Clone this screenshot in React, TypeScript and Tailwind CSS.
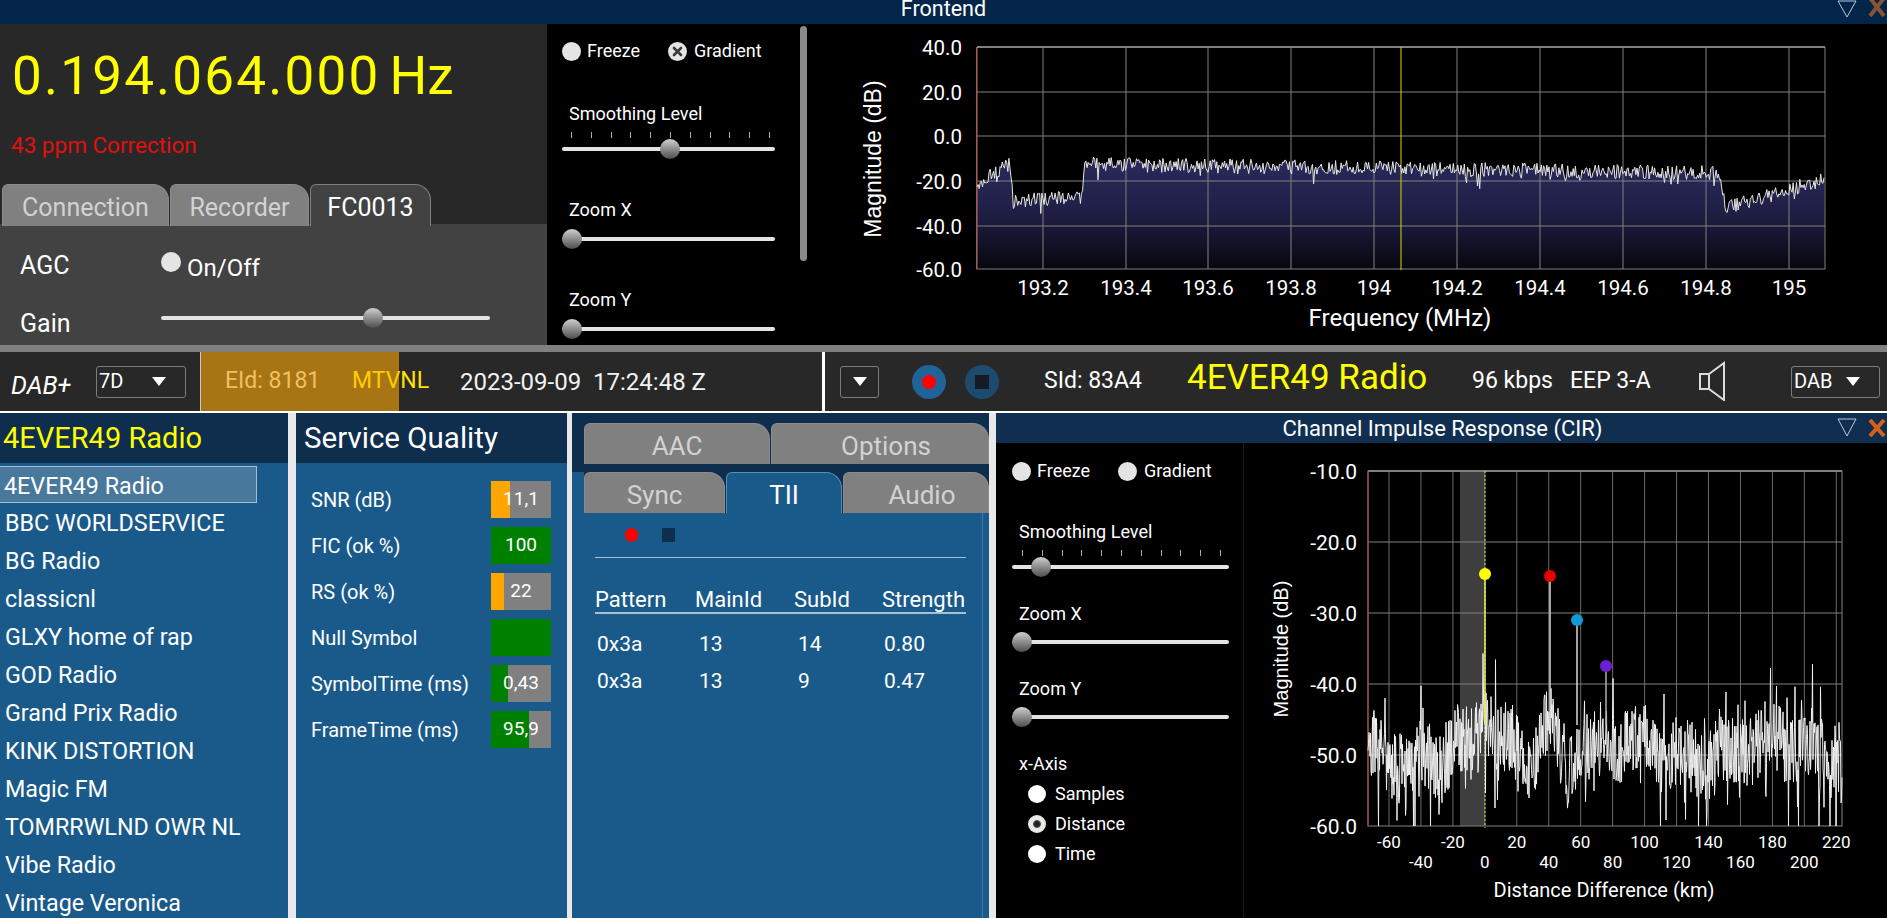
import React from 'react';

// deterministic noise so the traces don't change between renders
function makeRng(seed: number) {
  let s = seed;
  return () => {
    s = (s * 1664525 + 1013904223) % 4294967296;
    return s / 4294967296;
  };
}

const spectrumLevel = (x: number) => {
  if (x < 1010) return -21 + ((x - 977) / 33) * 9;
  if (x < 1013) return -12 - ((x - 1010) / 3) * 16;
  if (x < 1082) return -29 + ((x - 1013) / 69) * 2;
  if (x < 1084) return -27 + ((x - 1082) / 2) * 15;
  if (x < 1718) return -12.5 - ((x - 1084) / 634) * 4;
  if (x < 1726) return -16.5 - ((x - 1718) / 8) * 16;
  return -32 + ((x - 1726) / 99) * 13;
};

function spectrumPoints() {
  const rng = makeRng(49);
  const pts: string[] = [];
  for (let x = 977; x <= 1825; x += 1.1) {
    let db = spectrumLevel(x) + (rng() - 0.5) * 6.5;
    if (rng() < 0.06) db -= rng() * 6;
    pts.push(`${x.toFixed(1)},${(136 - db * 2.25).toFixed(1)}`);
  }
  return pts;
}

function cirPoints() {
  const rng = makeRng(8181);
  const pts: string[] = [];
  for (let x = 1368; x <= 1842; x += 0.5) {
    const slow = Math.sin(x / 23) * 1.5 + Math.sin(x / 7) * 1.2;
    const near = Math.exp(-((x - 1485) ** 2) / 60) * 4 + Math.exp(-((x - 1550) ** 2) / 60) * 6;
    let db = -49.5 + slow + near + (rng() - 0.5) * 10;
    if (rng() < 0.1) db += rng() * 7;
    if (rng() < 0.08) db -= rng() * 11;
    db = Math.max(db, -60);
    pts.push(`${x.toFixed(1)},${(471 + (-10 - db) * 7.1).toFixed(1)}`);
  }
  return pts;
}

const Knob = ({ left }: { left: number }) => (
  <div
    className="absolute top-1/2 -translate-y-1/2 w-5 h-5 rounded-full bg-gradient-to-b from-[#d0d0d0] to-[#4f4f4f]"
    style={{ left }}
  />
);

const Slider = ({ width, knob, className }: { width: number; knob: number; className?: string }) => (
  <div className={`relative h-5 ${className ?? ''}`} style={{ width }}>
    <div className="absolute left-0 right-0 top-[8px] h-1 rounded-full bg-[#e4e4e4]" />
    <Knob left={knob} />
  </div>
);

const Ticks = ({ className }: { className?: string }) => (
  <div className={`flex justify-between w-[199px] h-[6px] ${className ?? ''}`}>
    {Array.from({ length: 11 }).map((_, i) => (
      <div key={i} className="w-px h-full bg-[#b0b0b0]" />
    ))}
  </div>
);

const Dot = () => <div className="w-[19px] h-[19px] rounded-full bg-[#e4e4e4] shrink-0" />;

const CheckX = () => (
  <svg width="19" height="19" viewBox="0 0 19 19" className="shrink-0">
    <circle cx="9.5" cy="9.5" r="9.5" fill="#e4e4e4" />
    <path d="M6 6l7 7M13 6l-7 7" stroke="#3c3c3c" strokeWidth="2.6" strokeLinecap="round" />
  </svg>
);

const ArrowDown = () => (
  <svg width="14" height="9" viewBox="0 0 14 9">
    <path d="M0 0h14L7 9z" fill="#fff" />
  </svg>
);

const Combo = ({ label, className }: { label?: string; className?: string }) => (
  <div className={`flex items-center h-[32px] rounded-[3px] border border-[#7c7c7c] text-[20px] text-white ${className ?? ''}`}>
    {label && <span className="ml-[2px] -mt-[2px]">{label}</span>}
    <span className={label ? 'ml-auto mr-[19px] flex' : 'mx-auto flex'}>
      <ArrowDown />
    </span>
  </div>
);

const Tab = ({ label, active, className }: { label: string; active?: boolean; className?: string }) => (
  <div
    className={`flex items-center justify-center rounded-tl-[6px] rounded-tr-[16px] border border-b-0 ${className ?? ''}`}
  >
    <span className={active ? 'text-white' : 'text-[#d2d2d2]'}>{label}</span>
  </div>
);

const Frontend = () => {
  const pts = spectrumPoints();
  const xs = [1043, 1126, 1208, 1291, 1374, 1457, 1540, 1623, 1706, 1789];
  const xl = ['193.2', '193.4', '193.6', '193.8', '194', '194.2', '194.4', '194.6', '194.8', '195'];
  const ys: [number, string][] = [[47, '40.0'], [92, '20.0'], [136, '0.0'], [181, '-20.0'], [226, '-40.0'], [269, '-60.0']];
  return (
    <svg viewBox="820 24 1067 321" className="flex-1 h-full bg-black">
      <defs>
        <linearGradient id="specFill" gradientUnits="userSpaceOnUse" x1="0" y1="160" x2="0" y2="270">
          <stop offset="0" stopColor="#2a2a5c" />
          <stop offset="0.5" stopColor="#1e1e44" />
          <stop offset="1" stopColor="#06060d" />
        </linearGradient>
      </defs>
      <polygon points={`977,269 ${pts.join(' ')} 1825,269`} fill="url(#specFill)" />
      {xs.map(x => <line key={x} x1={x} x2={x} y1="47" y2="269" stroke="#808080" />)}
      {ys.slice(1, 5).map(([y]) => <line key={y} x1="977" x2="1825" y1={y} y2={y} stroke="#808080" />)}
      <rect x="977" y="47.5" width="848" height="221.5" fill="none" stroke="#808080" />
      <line x1="977" x2="1825" y1="47" y2="47" stroke="#808080" strokeWidth="2" />
      <line x1="976.5" x2="976.5" y1="47" y2="269" stroke="#b85050" />
      <line x1="1401" x2="1401" y1="47" y2="270" stroke="#d8d800" />
      <polyline points={pts.join(' ')} fill="none" stroke="#e6e6e6" strokeWidth="1" />
      {ys.map(([y, t]) => (
        <text key={t} x="962" y={y + 8} textAnchor="end" fontSize="20.5" fill="#fff">{t}</text>
      ))}
      {xs.map((x, i) => (
        <text key={x} x={x} y="295" textAnchor="middle" fontSize="20.5" fill="#fff">{xl[i]}</text>
      ))}
      <text x="1400" y="326" textAnchor="middle" fontSize="24" fill="#fff">Frequency (MHz)</text>
      <text
        x="881"
        y="159"
        textAnchor="middle"
        fontSize="23"
        fontFamily="Liberation Sans"
        fill="#fff"
        transform="rotate(-90 881 159)"
      >
        Magnitude (dB)
      </text>
    </svg>
  );
};

const Cir = () => {
  const pts = cirPoints();
  const ys: [number, string][] = [[471, '-10.0'], [542, '-20.0'], [613, '-30.0'], [684, '-40.0'], [755, '-50.0'], [826, '-60.0']];
  const ticks = Array.from({ length: 15 }).map((_, i) => ({ x: 1389 + i * 31.95, v: -60 + i * 20 }));
  const markers = [
    { x: 1485, y: 574, c: '#ffff00', line: '#e8e84a' },
    { x: 1550, y: 576, c: '#e60000', line: '#d8d8d8' },
    { x: 1577, y: 620, c: '#0f9ad6', line: '#d8d8d8' },
    { x: 1606, y: 666, c: '#6a1fd0', line: '#b0b0b0' },
  ];
  return (
    <svg viewBox="1244 443 643 475" className="flex-1 h-full bg-black">
      <rect x="1460" y="471" width="25" height="355" fill="#3e3e3e" />
      {ticks.map(t => <line key={t.v} x1={t.x} x2={t.x} y1="471" y2="826" stroke="#6a6a6a" />)}
      {ys.slice(1, 5).map(([y]) => <line key={y} x1="1368" x2="1842" y1={y} y2={y} stroke="#808080" />)}
      <rect x="1368" y="471" width="474" height="355" fill="none" stroke="#808080" />
      <line x1="1368" x2="1842" y1="471" y2="471" stroke="#808080" strokeWidth="2" />
      <line x1="1368" x2="1368" y1="471" y2="826" stroke="#a84040" />
      <line x1="1485" x2="1485" y1="471" y2="828" stroke="#e0e040" strokeDasharray="2 2" />
      <polyline points={pts.join(' ')} fill="none" stroke="#f0f0f0" strokeWidth="1" />
      {markers.map(m => (
        <g key={m.x}>
          <line x1={m.x} x2={m.x} y1={m.y} y2="725" stroke={m.line} strokeWidth="1.5" />
          <circle cx={m.x} cy={m.y} r="6" fill={m.c} />
        </g>
      ))}
      {ys.map(([y, t]) => (
        <text key={t} x="1357" y={y + 8} textAnchor="end" fontSize="21" fill="#fff">{t}</text>
      ))}
      {ticks.map((t, i) => (
        <text key={t.v} x={t.x} y={i % 2 === 0 ? 848 : 868} textAnchor="middle" fontSize="17" fill="#fff">{t.v}</text>
      ))}
      <text x="1604" y="897" textAnchor="middle" fontSize="20" fill="#fff">Distance Difference (km)</text>
      <text
        x="1288"
        y="649"
        textAnchor="middle"
        fontSize="20"
        fontFamily="Liberation Sans"
        fill="#fff"
        transform="rotate(-90 1288 649)"
      >
        Magnitude (dB)
      </text>
    </svg>
  );
};

const services = [
  'BBC WORLDSERVICE', 'BG Radio', 'classicnl', 'GLXY home of rap', 'GOD Radio', 'Grand Prix Radio',
  'KINK DISTORTION', 'Magic FM', 'TOMRRWLND OWR NL', 'Vibe Radio', 'Vintage Veronica',
];

const quality = [
  { name: 'SNR (dB)', value: '11,1', pct: 32, color: 'bg-[#ffa500]' },
  { name: 'FIC (ok %)', value: '100', pct: 100, color: 'bg-[#008000]' },
  { name: 'RS (ok %)', value: '22', pct: 22, color: 'bg-[#ffa500]' },
  { name: 'Null Symbol', value: '', pct: 100, color: 'bg-[#008000]' },
  { name: 'SymbolTime (ms)', value: '0,43', pct: 28, color: 'bg-[#008000]' },
  { name: 'FrameTime (ms)', value: '95,9', pct: 63, color: 'bg-[#008000]' },
];

const tiiRows = [
  ['0x3a', '13', '14', '0.80'],
  ['0x3a', '13', '9', '0.47'],
];

const tabIdle = 'bg-[#808080] border-[#8c8c8c]';

export default function App() {
  return (
    <div className="w-[1887px] h-[918px] overflow-hidden flex flex-col bg-black text-white font-['Roboto','Noto_Sans',sans-serif]">
      {/* window title */}
      <div className="h-6 shrink-0 bg-[#03254a] relative overflow-hidden flex justify-center">
        <span className="text-[21.5px] leading-none mt-[-2px]">Frontend</span>
        <div className="absolute right-0 top-0 flex items-start gap-[10px]">
          <svg width="20" height="18" viewBox="0 0 20 18"><path d="M1 1h18L10 17z" fill="none" stroke="#b9cbd8" strokeWidth="1" /></svg>
          <svg width="20" height="18" viewBox="0 0 20 18"><path d="M3 -2l14 18M17 -2L3 16" stroke="#8a5230" strokeWidth="4" /></svg>
        </div>
      </div>

      {/* frontend row */}
      <div className="h-[321px] shrink-0 flex">
        <div className="w-[547px] shrink-0 bg-[#282828] flex flex-col">
          <div className="h-[160px] shrink-0 pl-[12px]">
            <div className="flex items-baseline mt-[14px] h-[76px] text-[#ffff00] text-[53px] leading-[76px]">
              <span className="tracking-[2.2px]">0.194.064.000</span>
              <span className="ml-[9px]">Hz</span>
            </div>
            <div className="mt-[17px] text-[#e01010] text-[22.5px] leading-[28px] -ml-[1px]">43 ppm Correction</div>
          </div>
          <div className="h-[40px] shrink-0 flex pl-[2px] gap-px text-[25px] relative z-10">
            <Tab label="Connection" className={`w-[167px] h-[42px] pt-[4px] ${tabIdle}`} />
            <Tab label="Recorder" className={`w-[139px] h-[42px] pt-[4px] ${tabIdle}`} />
            <Tab label="FC0013" active className="w-[121px] h-[42px] pt-[4px] bg-[#424242] border-[#808080]" />
          </div>
          <div className="flex-1 bg-[#424242] pl-[20px] text-[25px]">
            <div className="flex items-center h-[34px] mt-[25px]">
              <span className="w-[141px]">AGC</span>
              <div className="w-5 h-5 rounded-full bg-[#e4e4e4] -mt-[8px]" />
              <span className="ml-[6px] text-[24px] mt-[3px]">On/Off</span>
            </div>
            <div className="flex items-center h-[34px] mt-[24px]">
              <span className="w-[141px]">Gain</span>
              <Slider width={329} knob={202} className="-mt-[12px]" />
            </div>
          </div>
        </div>

        <div className="w-[273px] shrink-0 bg-black flex">
          <div className="w-[253px] shrink-0 pl-[15px] text-[18px] leading-[24px]">
            <div className="flex items-center mt-[15px] h-6">
              <Dot />
              <span className="ml-[6px] w-[81px]">Freeze</span>
              <CheckX />
              <span className="ml-[7px]">Gradient</span>
            </div>
            <div className="ml-[7px] mt-[39px]">Smoothing Level</div>
            <Ticks className="ml-[9px] mt-[6px]" />
            <Slider width={213} knob={98} className="mt-[1px]" />
            <div className="ml-[7px] mt-[39px]">Zoom X</div>
            <Slider width={213} knob={0} className="mt-[7px]" />
            <div className="ml-[7px] mt-[39px]">Zoom Y</div>
            <Slider width={213} knob={0} className="mt-[7px]" />
          </div>
          <div className="w-[7px] h-[235px] mt-[2px] rounded-full bg-[#8a8a8a]" />
        </div>

        <Frontend />
      </div>

      <div className="h-[7px] shrink-0 bg-[#808080]" />

      {/* status bar */}
      <div className="h-[59px] shrink-0 bg-[#282828] flex items-center text-[23px]">
        <span className="ml-[11px] w-[85px] italic text-[25px] mt-[8px]">DAB+</span>
        <Combo label="7D" className="w-[90px]" />
        <div className="ml-[14px] w-[199px] h-full bg-[#a87514] border-l border-[#c8c8c8] flex items-center relative">
          <span className="ml-[24px] text-[#f0c060]">EId: 8181</span>
          <span className="absolute left-[151px] text-[#ffcc00] whitespace-nowrap">MTV<span className="text-[#ffe100]">NL</span></span>
        </div>
        <span className="ml-[61px] w-[362px] text-[24px] whitespace-pre text-[#f2f2f2]">2023-09-09  17:24:48 Z</span>
        <div className="w-[3px] h-full bg-white" />
        <Combo className="ml-[15px] w-[39px]" />
        <div className="ml-[33px] w-[34px] h-[34px] rounded-full bg-[#1f6399] flex items-center justify-center">
          <div className="w-[14px] h-[14px] rounded-full bg-[#ff0000]" />
        </div>
        <div className="ml-[19px] w-[34px] h-[34px] rounded-full bg-[#1d4b70] flex items-center justify-center">
          <div className="w-[14px] h-[14px] bg-[#141b24]" />
        </div>
        <span className="ml-[45px] w-[143px]">SId: 83A4</span>
        <span className="w-[285px] text-[#ffff00] text-[35px] -mt-[6px] whitespace-nowrap">4EVER49 Radio</span>
        <span className="w-[98px]">96 kbps</span>
        <span className="w-[129px]">EEP 3-A</span>
        <svg width="28" height="40" viewBox="0 0 28 40" className="-mt-[2px]">
          <path d="M1 13h9v15H1zM10 13L25 2v37L10 28" fill="none" stroke="#dcdcdc" strokeWidth="2" />
        </svg>
        <Combo label="DAB" className="ml-[64px] w-[89px]" />
      </div>

      <div className="h-[2px] shrink-0 bg-white" />

      {/* bottom panels */}
      <div className="flex-1 min-h-0 flex bg-[#e8e8e8]">
        <div className="w-[288px] shrink-0 bg-[#1a5a8a] overflow-hidden">
          <div className="h-[50px] pt-[2px] bg-[#0f2d4d] pl-[3px] flex items-center text-[#ffff00] text-[29px] whitespace-nowrap">4EVER49 Radio</div>
          <div className="h-[37px] mt-[3px] w-[257px] pl-[4px] pt-[3px] flex items-center bg-[#49789d] border border-l-0 border-[#a4bccd] text-[23.3px]">4EVER49 Radio</div>
          {services.map(s => (
            <div key={s} className="h-[38px] pl-[5px] pt-[3px] flex items-center text-[23.3px] whitespace-nowrap">{s}</div>
          ))}
        </div>

        <div className="ml-[8px] w-[271px] shrink-0 bg-[#1a5a8a]">
          <div className="h-[50px] bg-[#0f2d4d] pl-[8px] flex items-center text-[29.5px]">Service Quality</div>
          <div className="mt-[18px] flex flex-col gap-[9px]">
            {quality.map(q => (
              <div key={q.name} className="h-[37px] flex items-center pl-[15px] text-[20px]">
                <span className="w-[180px] whitespace-nowrap">{q.name}</span>
                <div className="relative w-[60px] h-[37px] bg-[#808080] flex items-center justify-center text-[19px]">
                  <div className={`absolute left-0 top-0 bottom-0 ${q.color}`} style={{ width: `${q.pct}%` }} />
                  <span className="relative">{q.value}</span>
                </div>
              </div>
            ))}
          </div>
        </div>

        <div className="ml-[5px] w-[417px] shrink-0 bg-[#1a5a8a] flex flex-col">
          <div className="h-[59px] shrink-0 bg-[#0f2d4d] pl-[12px] pt-[10px] flex gap-px text-[26px]">
            <Tab label="AAC" className={`w-[186px] h-[41px] pt-[5px] ${tabIdle}`} />
            <Tab label="Options" className={`flex-1 h-[41px] pt-[5px] pl-[12px] ${tabIdle}`} />
          </div>
          <div className="h-[41px] shrink-0 ml-[12px] bg-[#0f2d4d] flex gap-px text-[26px]">
            <Tab label="Sync" className={`w-[141px] h-[41px] pt-[5px] ${tabIdle}`} />
            <Tab label="TII" active className="w-[116px] h-[41px] pt-[5px] bg-[#1a5a8a] border-[#5b90b6]" />
            <Tab label="Audio" className={`flex-1 h-[41px] pt-[5px] pl-[12px] ${tabIdle}`} />
          </div>
          <div className="flex-1 w-[411px] border-r border-[#3f78a5] pl-[23px]">
            <div className="flex items-center mt-[15px] h-[14px] pl-[30px]">
              <div className="w-[13px] h-[14px] rounded-full bg-[#ff0000]" />
              <div className="ml-[24px] w-[13px] h-[14px] bg-[#0f2d4d]" />
            </div>
            <div className="mt-[15px] w-[371px] h-px bg-[#a7c0d2]" />
            <div className="mt-[25px] w-[371px] h-[28px] grid grid-cols-[100px_99px_88px_84px] items-center text-[22px] whitespace-nowrap">
              <span>Pattern</span>
              <span>MainId</span>
              <span>SubId</span>
              <span>Strength</span>
            </div>
            <div className="mt-[1px] w-[371px] h-[2px] bg-[#a7c0d2]" />
            {tiiRows.map((r, i) => (
              <div key={i} className={`${i === 0 ? 'mt-[15px]' : 'mt-[9px]'} w-[371px] h-[28px] pl-[2px] grid grid-cols-[102px_99px_86px_84px] items-center text-[21px]`}>
                {r.map((c, j) => <span key={j}>{c}</span>)}
              </div>
            ))}
          </div>
        </div>

        <div className="ml-[7px] flex-1 min-w-0 flex flex-col">
          <div className="h-[30px] shrink-0 bg-[#0f2e50] relative flex justify-center items-center text-[22px]">
            <span className="ml-[2px]">Channel Impulse Response (CIR)</span>
            <svg width="20" height="19" viewBox="0 0 20 19" className="absolute left-[841px] top-[5px]">
              <path d="M1 1h18L10 18z" fill="none" stroke="#b9cbd8" strokeWidth="1" />
            </svg>
            <svg width="20" height="18" viewBox="0 0 20 18" className="absolute left-[871px] top-[6px]">
              <path d="M3 1l14 16M17 1L3 17" stroke="#d8601c" strokeWidth="4" />
            </svg>
          </div>
          <div className="flex-1 min-h-0 flex bg-black">
            <div className="w-[248px] shrink-0 border-r border-[#1c1c1c] pl-[16px] text-[18px] leading-[24px]">
              <div className="flex items-center mt-[16px] h-6">
                <Dot />
                <span className="ml-[6px] w-[81px]">Freeze</span>
                <Dot />
                <span className="ml-[7px]">Gradient</span>
              </div>
              <div className="ml-[7px] mt-[37px]">Smoothing Level</div>
              <Ticks className="ml-[10px] mt-[6px]" />
              <Slider width={217} knob={19} className="mt-[1px]" />
              <div className="ml-[7px] mt-[25px]">Zoom X</div>
              <Slider width={217} knob={0} className="mt-[6px]" />
              <div className="ml-[7px] mt-[25px]">Zoom Y</div>
              <Slider width={217} knob={0} className="mt-[6px]" />
              <div className="ml-[7px] mt-[25px]">x-Axis</div>
              {['Samples', 'Distance', 'Time'].map((r, i) => (
                <div key={r} className={`flex items-center h-[30px] pl-[16px] ${i === 0 ? 'mt-[3px]' : ''}`}>
                  {r === 'Distance' ? (
                    <div className="w-[18px] h-[18px] rounded-full bg-[#e8e8e8] flex items-center justify-center">
                      <div className="w-[8px] h-[8px] rounded-full bg-[#222] border border-[#555]" />
                    </div>
                  ) : (
                    <div className="w-[18px] h-[18px] rounded-full bg-white" />
                  )}
                  <span className="ml-[9px]">{r}</span>
                </div>
              ))}
            </div>
            <Cir />
          </div>
        </div>
      </div>
    </div>
  );
}
